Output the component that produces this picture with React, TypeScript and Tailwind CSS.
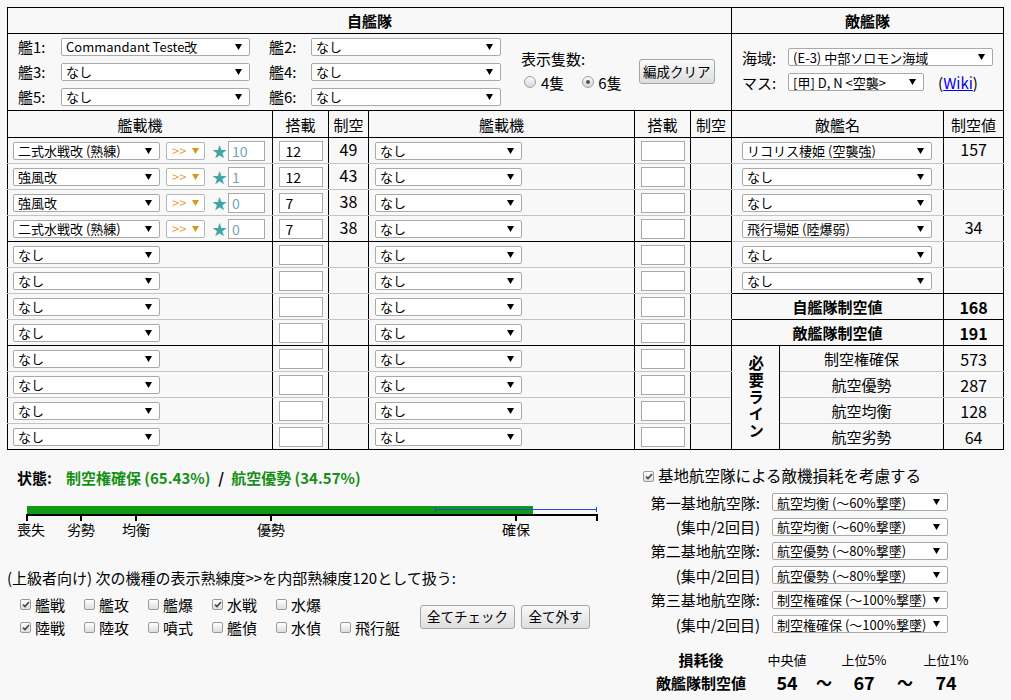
import React from 'react';

// ---------- Types ----------

type Equip = { name: string; pro?: boolean; star?: string; slot?: string; air?: string };
type Enemy = { name: string; air?: string };

// ---------- Data ----------

const NONE: Equip = { name: 'なし' };

const LEFT_EQUIPS: Equip[] = [
  { name: '二式水戦改 (熟練)', pro: true, star: '10', slot: '12', air: '49' },
  { name: '強風改', pro: true, star: '1', slot: '12', air: '43' },
  { name: '強風改', pro: true, star: '0', slot: '7', air: '38' },
  { name: '二式水戦改 (熟練)', pro: true, star: '0', slot: '7', air: '38' },
  ...Array.from({ length: 8 }, () => NONE),
];

const RIGHT_EQUIPS: Equip[] = Array.from({ length: 12 }, () => NONE);

const ENEMIES: Enemy[] = [
  { name: 'リコリス棲姫 (空襲強)', air: '157' },
  { name: 'なし' },
  { name: 'なし' },
  { name: '飛行場姫 (陸爆弱)', air: '34' },
  { name: 'なし' },
  { name: 'なし' },
];

const LINES = [
  { label: '制空権確保', value: '573' },
  { label: '航空優勢', value: '287' },
  { label: '航空均衡', value: '128' },
  { label: '航空劣勢', value: '64' },
];

const PROF_ROWS = [
  [
    { label: '艦戦', checked: true },
    { label: '艦攻' },
    { label: '艦爆' },
    { label: '水戦', checked: true },
    { label: '水爆' },
  ],
  [
    { label: '陸戦', checked: true },
    { label: '陸攻' },
    { label: '噴式' },
    { label: '艦偵' },
    { label: '水偵' },
    { label: '飛行艇' },
  ],
];

const BASES = [
  { label: '第一基地航空隊:', value: '航空均衡 (〜60%撃墜)' },
  { label: '(集中/2回目)', value: '航空均衡 (〜60%撃墜)' },
  { label: '第二基地航空隊:', value: '航空優勢 (〜80%撃墜)' },
  { label: '(集中/2回目)', value: '航空優勢 (〜80%撃墜)' },
  { label: '第三基地航空隊:', value: '制空権確保 (〜100%撃墜)' },
  { label: '(集中/2回目)', value: '制空権確保 (〜100%撃墜)' },
];

const TICKS = [
  { x: 26, label: '喪失', cx: 31 },
  { x: 80, label: '劣勢', cx: 81 },
  { x: 135, label: '均衡', cx: 136 },
  { x: 270, label: '優勢', cx: 271 },
  { x: 515, label: '確保', cx: 516 },
  { x: 596, label: '', cx: 0 },
];

// ---------- Small controls ----------

function Arrow({ color = '#000' }: { color?: string }) {
  return (
    <svg width="7" height="6" viewBox="0 0 7 6" className="shrink-0">
      <path d="M0 0H7L3.5 6Z" fill={color} />
    </svg>
  );
}

function Select({ text, className }: { text: string; className: string }) {
  return (
    <div
      className={`flex h-[18px] shrink-0 items-center justify-between rounded-[2px] border border-[#a9a9a9] bg-white pl-[4px] pr-[7px] text-[13px] leading-none ${className}`}
    >
      <span className="whitespace-nowrap">{text}</span>
      <Arrow />
    </div>
  );
}

function Input({ value, className }: { value?: string; className: string }) {
  return (
    <div className={`flex h-[20px] shrink-0 items-center border border-[#a9a9a9] bg-white text-[14px] leading-none ${className}`}>
      {value}
    </div>
  );
}

function Check({ checked }: { checked?: boolean }) {
  return (
    <span className="flex h-[11px] w-[11px] shrink-0 items-center justify-center rounded-[2px] border border-[#9a9a9a] bg-linear-to-b from-white to-[#dedede]">
      {checked && (
        <svg width="8" height="7" viewBox="0 0 8 7">
          <path d="M1 3.6L3 5.6L7 1" stroke="#4a4a4a" strokeWidth="1.7" fill="none" />
        </svg>
      )}
    </span>
  );
}

function Radio({ checked }: { checked?: boolean }) {
  return (
    <span className="flex h-[12px] w-[12px] shrink-0 items-center justify-center rounded-full border border-[#a0a0a0] bg-linear-to-b from-[#fafafa] to-[#d8d8d8]">
      {checked && <span className="h-[4px] w-[4px] rounded-full bg-[#555]" />}
    </span>
  );
}

function Button({ text, className }: { text: string; className: string }) {
  return (
    <div
      className={`flex shrink-0 items-center justify-center rounded-[3px] border border-[#a5a5a5] bg-linear-to-b from-[#f9f9f9] to-[#dedede] text-[13.5px] leading-none ${className}`}
    >
      {text}
    </div>
  );
}

// ---------- Table rows ----------

function EquipCells({ eq, wide, bottom }: { eq: Equip; wide: boolean; bottom: string }) {
  return (
    <>
      <td className={`border border-black p-0 ${bottom}`}>
        <div className={`flex items-center ${wide ? 'pl-[5px]' : 'pl-[6px]'}`}>
          <Select text={eq.name} className="w-[147px]" />
          {eq.pro && (
            <>
              <div className="ml-[6px] flex h-[18px] w-[39px] shrink-0 items-center justify-between rounded-[2px] border border-[#b5b5b5] bg-white pl-[5px] pr-[5px] text-[13px] leading-none text-[#e8a23a]">
                <span>&gt;&gt;</span>
                <Arrow color="#d8961c" />
              </div>
              <span className="ml-[7px] text-[15px] leading-none text-[#3fa5a5]">★</span>
              <Input value={eq.star} className="ml-[1px] w-[37px] pl-[3px] text-[#6fa6b8]" />
            </>
          )}
        </div>
      </td>
      <td className={`border border-black p-0 ${bottom}`}>
        <div className="flex justify-center">
          <Input value={eq.slot} className="w-[44px] pl-[6px]" />
        </div>
      </td>
      <td className={`border border-black p-0 pb-[3px] text-center text-[16px] leading-none ${bottom}`}>{eq.air}</td>
    </>
  );
}

function RightCells({ i }: { i: number }) {
  const gray = 'border-b-[#c4c4c4]';
  if (i < 6) {
    const e = ENEMIES[i];
    const bottom = i === 5 ? '' : gray;
    return (
      <>
        <td colSpan={2} className={`border border-black p-0 ${bottom}`}>
          <div className="flex pl-[10px]">
            <Select text={e.name} className="w-[190px]" />
          </div>
        </td>
        <td className={`border border-black p-0 pb-[3px] text-center text-[16px] leading-none ${bottom}`}>{e.air}</td>
      </>
    );
  }
  if (i === 6 || i === 7) {
    return (
      <>
        <td colSpan={2} className="border border-black p-0 text-center text-[15px] font-bold leading-none">
          {i === 6 ? '自艦隊制空値' : '敵艦隊制空値'}
        </td>
        <td className="border border-black p-0 text-center text-[16px] font-bold leading-none">{i === 6 ? '168' : '191'}</td>
      </>
    );
  }
  const line = LINES[i - 8];
  const bottom = i === 11 ? '' : gray;
  return (
    <>
      {i === 8 && (
        <td rowSpan={4} className="border border-black p-0">
          <div className="flex justify-center">
            <span className="text-[15.5px] font-bold leading-none tracking-[1.5px] [text-orientation:upright] [writing-mode:vertical-rl]">
              必要ライン
            </span>
          </div>
        </td>
      )}
      <td className={`border border-black p-0 text-center text-[15px] leading-none ${bottom}`}>{line.label}</td>
      <td className={`border border-black p-0 text-center text-[16px] leading-none ${bottom}`}>{line.value}</td>
    </>
  );
}

// ---------- Page ----------

export default function App() {
  const shipRows = [
    ['艦1:', 'Commandant Teste改', '艦2:', 'なし'],
    ['艦3:', 'なし', '艦4:', 'なし'],
    ['艦5:', 'なし', '艦6:', 'なし'],
  ];

  return (
    <div className="h-[700px] w-[1011px] overflow-hidden bg-[#f8f8f8] font-['Noto_Sans_CJK_JP','Noto_Sans',sans-serif] text-black">
      <div className="pl-[7px] pt-[7px]">
        <table className="w-[996px] table-fixed border-collapse">
          <colgroup>
            <col className="w-[265px]" />
            <col className="w-[56px]" />
            <col className="w-[40px]" />
            <col className="w-[266px]" />
            <col className="w-[56px]" />
            <col className="w-[41px]" />
            <col className="w-[48px]" />
            <col className="w-[164px]" />
            <col className="w-[60px]" />
          </colgroup>
          <tbody>
            {/* Fleet headers */}
            <tr className="h-[26px]">
              <td colSpan={6} className="border border-black p-0 text-center text-[15px] font-bold leading-none">
                自艦隊
              </td>
              <td colSpan={3} className="border border-black p-0 text-center text-[15px] font-bold leading-none">
                敵艦隊
              </td>
            </tr>

            {/* Ship selection / area selection */}
            <tr className="h-[77px]">
              <td colSpan={6} className="border border-black p-0 align-top">
                <div className="flex items-start">
                  <div className="flex flex-col pl-[10px]">
                    {shipRows.map((r) => (
                      <div key={r[0]} className="flex h-[25px] items-center text-[15px]">
                        <span className="w-[43px] leading-none">{r[0]}</span>
                        <Select text={r[1]} className="w-[189px]" />
                        <span className="ml-[19px] w-[42px] leading-none">{r[2]}</span>
                        <Select text={r[3]} className="w-[190px]" />
                      </div>
                    ))}
                  </div>
                  <div className="ml-[20px] mt-[16px] flex flex-col text-[15px]">
                    <span className="leading-[18px]">表示隻数:</span>
                    <div className="mt-[6px] flex h-[16px] items-center pl-[3px] leading-none">
                      <Radio />
                      <span className="ml-[5px]">4隻</span>
                      <span className="ml-[18px]">
                        <Radio checked />
                      </span>
                      <span className="ml-[4px]">6隻</span>
                    </div>
                  </div>
                  <Button text="編成クリア" className="ml-[17px] mt-[25px] h-[25px] w-[76px]" />
                </div>
              </td>
              <td colSpan={3} className="border border-black p-0 align-top">
                <div className="flex flex-col pl-[10px] pt-[14px] text-[15px]">
                  <div className="flex h-[18px] items-center">
                    <span className="w-[46px] leading-none">海域:</span>
                    <Select text="(E-3) 中部ソロモン海域" className="w-[205px]" />
                  </div>
                  <div className="mt-[7px] flex h-[18px] items-center">
                    <span className="w-[46px] leading-none">マス:</span>
                    <Select text="[甲] D, N <空襲>" className="w-[136px]" />
                    <span className="ml-[14px] leading-none">
                      (<span className="text-[#0000ee] underline">Wiki</span>)
                    </span>
                  </div>
                </div>
              </td>
            </tr>

            {/* Column headers */}
            <tr className="h-[27px] text-[15px]">
              <td className="border border-black p-0 text-center leading-none">艦載機</td>
              <td className="border border-black p-0 text-center leading-none">搭載</td>
              <td className="border border-black p-0 text-center leading-none">制空</td>
              <td className="border border-black p-0 text-center leading-none">艦載機</td>
              <td className="border border-black p-0 text-center leading-none">搭載</td>
              <td className="border border-black p-0 text-center leading-none">制空</td>
              <td colSpan={2} className="border border-black p-0 text-center leading-none">
                敵艦名
              </td>
              <td className="border border-black p-0 text-center leading-none">制空値</td>
            </tr>

            {/* Equipment rows */}
            {LEFT_EQUIPS.map((eq, i) => {
              const bottom = i % 4 === 3 ? '' : 'border-b-[#c4c4c4]';
              return (
                <tr key={i} className="h-[26px]">
                  <EquipCells eq={eq} wide bottom={bottom} />
                  <EquipCells eq={RIGHT_EQUIPS[i]} wide={false} bottom={bottom} />
                  <RightCells i={i} />
                </tr>
              );
            })}
          </tbody>
        </table>
      </div>

      {/* Bottom area */}
      <div className="flex">
        {/* Left: status, bar, proficiency options */}
        <div className="flex w-[640px] shrink-0 flex-col">
          <div className="mt-[19px] flex h-[18px] items-center pl-[17px] text-[15px] font-bold leading-[18px]">
            <span>状態:</span>
            <span className="ml-[14px] text-[#168f16]">制空権確保 (65.43%)</span>
            <span className="ml-[8px]">/</span>
            <span className="ml-[7px] text-[#168f16]">航空優勢 (34.57%)</span>
          </div>

          <div className="relative mt-[15px] h-[40px]">
            <div className="absolute left-[27px] top-[4px] h-[8px] w-[506px] bg-[#119911]" />
            <div className="absolute left-[435px] top-[7px] h-px w-[162px] bg-[#2446ee]" />
            <div className="absolute left-[435px] top-[5px] h-[5px] w-px bg-[#2446ee]" />
            <div className="absolute left-[596px] top-[5px] h-[5px] w-px bg-[#2446ee]" />
            <div className="absolute left-[27px] top-[12px] h-[2px] w-[571px] bg-black" />
            {TICKS.map((t) => (
              <div key={t.x} className="absolute top-[12px] h-[7px] w-[2px] bg-black" style={{ left: t.x }} />
            ))}
            {TICKS.filter((t) => t.label).map((t) => (
              <span
                key={t.label}
                className="absolute top-[20px] -translate-x-1/2 whitespace-nowrap text-[14px] leading-[15px]"
                style={{ left: t.cx }}
              >
                {t.label}
              </span>
            ))}
          </div>

          <div className="mt-[27px] pl-[7px] text-[15px] leading-[18px]">
            (上級者向け) 次の機種の表示熟練度&gt;&gt;を内部熟練度120として扱う:
          </div>

          <div className="mt-[6px] flex items-start">
            <div className="flex flex-col pl-[20px]">
              {PROF_ROWS.map((row, ri) => (
                <div key={ri} className="flex h-[23px] items-center">
                  {row.map((c) => (
                    <div key={c.label} className="flex w-[64px] items-center">
                      <Check checked={c.checked} />
                      <span className="ml-[4px] text-[15px] leading-none">{c.label}</span>
                    </div>
                  ))}
                </div>
              ))}
            </div>
            <Button text="全てチェック" className="ml-[16px] mt-[12px] h-[24px] w-[95px]" />
            <Button text="全て外す" className="ml-[6px] mt-[12px] h-[24px] w-[69px]" />
          </div>
        </div>

        {/* Right: land base options */}
        <div className="flex flex-1 flex-col">
          <div className="mt-[17px] flex h-[18px] items-center pl-[3px]">
            <Check checked />
            <span className="ml-[4px] text-[15.5px] leading-none">基地航空隊による敵機損耗を考慮する</span>
          </div>

          <div className="mt-[5px] flex flex-col">
            {BASES.map((b, i) => (
              <div key={i} className="flex h-[24.4px] items-center">
                <span className="w-[120px] text-right text-[15px] leading-none">{b.label}</span>
                <Select text={b.value} className="ml-[12px] w-[176px]" />
              </div>
            ))}
          </div>

          <div className="mt-[13px] flex h-[20px] items-center">
            <span className="w-[122px] text-center text-[15px] font-bold leading-none">損耗後</span>
            <span className="w-[50px] text-center text-[13px] leading-none">中央値</span>
            <span className="w-[24px]" />
            <span className="w-[56px] text-center text-[13px] leading-none">上位5%</span>
            <span className="w-[26px]" />
            <span className="w-[56px] text-center text-[13px] leading-none">上位1%</span>
          </div>
          <div className="flex h-[26px] items-center font-bold">
            <span className="w-[122px] text-center text-[15px] leading-none">敵艦隊制空値</span>
            <span className="w-[50px] text-center text-[18px] leading-none">54</span>
            <span className="w-[24px] text-center text-[16px] leading-none">〜</span>
            <span className="w-[56px] text-center text-[18px] leading-none">67</span>
            <span className="w-[26px] text-center text-[16px] leading-none">〜</span>
            <span className="w-[56px] text-center text-[18px] leading-none">74</span>
          </div>
        </div>
      </div>
    </div>
  );
}
